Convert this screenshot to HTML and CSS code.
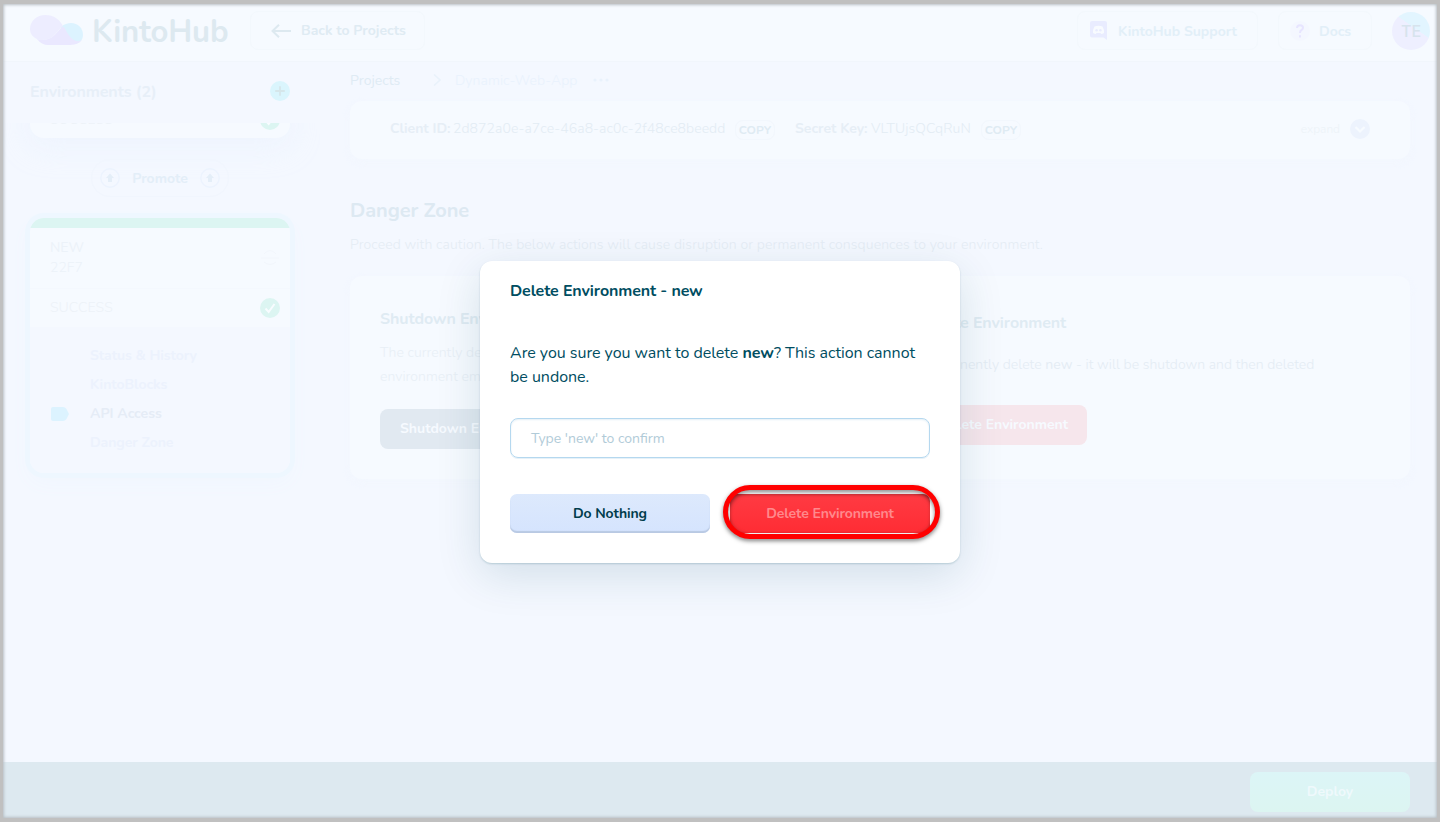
FILE: index.html
```html
<!DOCTYPE html>
<html lang="en">
<head>
<meta charset="utf-8">
<title>KintoHub</title>
<link rel="stylesheet" href="styles.css">
</head>
<body>
<div class="app">
  <header class="topbar">
    <svg class="cloud" width="54" height="31" viewBox="0 0 54 31">
      <path d="M31 12C34 9 38 8 41 8C48 8 53 13 53 20C53 26 48 29 43 29L32 24Z" fill="#dcf3ff"/>
      <path d="M7 24C20 27 25 20 30 14C34 9 35 14 38 19C42 25 47 28 52 25C49 29 44 30 38 30H18C14 30 10 28 7 24Z" fill="#eae8ff"/>
      <path d="M15.500 0C24 0 29 4 33 11C27 15 24 25 13 25C11 25 9 25 7 24C3 22 0 19 0 14C0 6 7 0 15.500 0Z" fill="#ededff"/>
    </svg>
    <span class="wordmark">KintoHub</span>
    <a class="pill back">
      <svg width="20" height="14" viewBox="0 0 20 14" fill="none" stroke="#dde9f0" stroke-width="2"><path d="M20 7H2M8 0.700L1.500 7L8 13.300"/></svg>
      <span>Back to Projects</span>
    </a>
    <span class="spacer"></span>
    <a class="pill support">
      <svg width="17" height="19" viewBox="0 0 17 19"><path d="M2 0H15Q17 0 17 2V19L13.500 16.500H2Q0 16.500 0 14.500V2Q0 0 2 0Z" fill="#e9ecff"/><path d="M4.500 5.500Q8.500 4 12.500 5.500Q14.500 9 14 12Q12.500 13 11.200 13L10.500 12H6.500L5.800 13Q4.500 13 3 12Q2.500 9 4.500 5.500Z" fill="#f8fbff"/><circle cx="6.600" cy="9.300" r="1.200" fill="#e9ecff"/><circle cx="10.400" cy="9.300" r="1.200" fill="#e9ecff"/></svg>
      <span>KintoHub Support</span>
    </a>
    <a class="pill docs">
      <span class="question"><svg width="8" height="14" viewBox="0 0 8 14" fill="none" stroke="#e7e5ff" stroke-width="2"><path d="M1 4Q1 1.200 4 1.200Q7 1.200 7 3.700Q7 5.200 5.500 6Q4 6.800 4 9"/><path d="M4 11.300V13.600"/></svg></span>
      <span>Docs</span>
    </a>
    <span class="avatar">TE</span>
  </header>

  <div class="columns">
    <aside class="sidebar">
      <div class="side-head">
        <h2>Environments (2)</h2>
        <svg width="20" height="20" viewBox="0 0 20 20"><circle cx="10" cy="10" r="10" fill="#daf5fd"/><path d="M10 5.200V14.800M5.200 10H14.800" stroke="#d5e6ea" stroke-width="1.800"/></svg>
      </div>
      <div class="env-list">
        <div class="env-card previous">
          <div class="status"><span>SUCCESS</span>
            <svg width="20" height="20" viewBox="0 0 20 20"><circle cx="10" cy="10" r="10" fill="#dcf5f2"/><path d="M5.500 10.500L8.700 14L14.500 6" fill="none" stroke="#f8fcff" stroke-width="2"/></svg>
          </div>
        </div>
        <div class="promote">
          <svg width="20" height="20" viewBox="0 0 20 20"><circle cx="10" cy="10" r="9.200" fill="none" stroke="#ecf3fe" stroke-width="1.400"/><path d="M10 5.500L14 10H12V14H8V10H6Z" fill="#e4eef8"/></svg>
          <span>Promote</span>
          <svg width="20" height="20" viewBox="0 0 20 20"><circle cx="10" cy="10" r="9.200" fill="none" stroke="#ecf3fe" stroke-width="1.400"/><path d="M10 5.500L14 10H12V14H8V10H6Z" fill="#e4eef8"/></svg>
        </div>
        <div class="env-card current">
          <div class="env-stripe"></div>
          <div class="env-name">
            <div><div class="name">NEW</div><div class="hash">22F7</div></div>
            <svg width="20" height="16" viewBox="0 0 20 16" fill="none" stroke="#f2f6fc" stroke-width="1"><path d="M4 4Q10-3 16 4M1 8H19M4 12Q10 17 16 12"/></svg>
          </div>
          <div class="status"><span>SUCCESS</span>
            <svg width="20" height="20" viewBox="0 0 20 20"><circle cx="10" cy="10" r="10" fill="#dcf5f2"/><path d="M5.500 10.500L8.700 14L14.500 6" fill="none" stroke="#f8fcff" stroke-width="2"/></svg>
          </div>
          <nav class="env-nav">
            <a>Status &amp; History</a>
            <a>KintoBlocks</a>
            <a class="active"><svg width="18" height="14" viewBox="0 0 18 14"><path d="M2 0H12Q14 0 15.500 2L18 7L15.500 12Q14 14 12 14H2Q0 14 0 12V2Q0 0 2 0Z" fill="#dcf3ff"/></svg>API Access</a>
            <a>Danger Zone</a>
          </nav>
        </div>
      </div>
    </aside>

    <main class="main">
      <div class="crumbs">
        <span class="root">Projects</span>
        <svg width="9" height="12" viewBox="0 0 9 12" fill="none" stroke="#e9f2fb" stroke-width="1.600"><path d="M1 .5L7 6L1 11.500"/></svg>
        <span class="leaf">Dynamic-Web-App</span>
        <svg width="16" height="4" viewBox="0 0 16 4" fill="#e9f2fc"><circle cx="2" cy="2" r="1.600"/><circle cx="8" cy="2" r="1.600"/><circle cx="14" cy="2" r="1.600"/></svg>
      </div>
      <section class="panel keys">
        <b class="client">Client ID:</b><span class="id">2d872a0e-a7ce-46a8-ac0c-2f48ce8beedd</span><span class="copy">COPY</span>
        <b class="secret">Secret Key:</b><span class="key">VLTUjsQCqRuN</span><span class="copy">COPY</span>
        <span class="spacer"></span>
        <span class="expand">expand</span>
        <svg width="20" height="20" viewBox="0 0 20 20"><circle cx="10" cy="10" r="10" fill="#edf3fd"/><path d="M5.500 8L10 12.500L14.500 8" fill="none" stroke="#f7fbff" stroke-width="2.200"/></svg>
      </section>
      <h1>Danger Zone</h1>
      <p class="intro">Proceed with caution. The below actions will cause disruption or permanent consquences to your environment.</p>
      <div class="cards">
        <section class="action shutdown">
          <h3>Shutdown Environment</h3>
          <p>The currently deployed<br>environment emptied</p>
          <button>Shutdown Environment</button>
        </section>
        <section class="action delete">
          <h3>Delete Environment</h3>
          <p>Permanently delete <b>new</b> - it will be shutdown and then deleted</p>
          <button>Delete Environment</button>
        </section>
      </div>
    </main>
  </div>

  <footer class="footer"><button>Deploy</button></footer>

  <div class="modal" role="dialog">
    <h2>Delete Environment - new</h2>
    <p>Are you sure you want to delete <b>new</b>? This action cannot be undone.</p>
    <div class="input">Type 'new' to confirm</div>
    <div class="buttons">
      <button class="cancel">Do Nothing</button>
      <button class="confirm">Delete Environment</button>
    </div>
    <div class="ring"></div>
  </div>
  <div class="frame"></div>
</div>
</body>
</html>
```
FILE: styles.css
```css
* { box-sizing: border-box; }
body { margin: 0; font-family: Nunito, Lato, "Open Sans", sans-serif; font-size: 14px; }
h1, h2, h3, p { margin: 0; }
button { border: 0; font: inherit; font-weight: 700; }
svg { display: block; flex: none; }
.app { position: relative; width: 1440px; height: 822px; overflow: hidden; background: #f4f8ff; display: flex; flex-direction: column; }
.spacer { flex: 1; }

.topbar { height: 62px; flex: none; display: flex; align-items: center; padding: 0 10px 0 30px; background: #f6faff; border-bottom: 1px solid #f1f6fc; }
.wordmark { width: 158px; margin-left: 8px; padding-top: 2px; color: #dde9f0; font-size: 31px; font-weight: 700; line-height: 40px; letter-spacing: -.15px; }
.pill { height: 39px; display: flex; align-items: center; border: 1px solid #f3f8fd; border-radius: 8px; color: #dfebf3; font-weight: 700; }
.back { width: 175px; padding-left: 20px; gap: 10px; }
.support { width: 181px; padding-left: 12px; gap: 11px; color: #e2eff8; }
.docs { width: 94px; margin-left: 20px; padding-left: 11px; gap: 9px; color: #e2eff8; }
.support span, .docs > span:last-child { padding-top: 1px; }
.question { width: 20px; height: 20px; border-radius: 50%; background: #f4f7ff; display: grid; place-items: center; }
.avatar { width: 38px; height: 38px; margin-left: 20px; border-radius: 50%; background: linear-gradient(35deg, #eeefff 58%, #e2f5ff 59%); color: #d7e3ed; font: 500 16px/38px Inter, sans-serif; text-align: center; }

.columns { flex: 1; display: flex; min-height: 0; }
.sidebar { width: 320px; flex: none; background: #f4f8ff; }
.side-head { height: 61px; padding: 0 30px; display: flex; align-items: center; justify-content: space-between; }
.side-head h2 { margin-top: -2px; color: #e7eff8; font-size: 16px; line-height: 24px; letter-spacing: -.05px; }
.side-head svg { margin-top: -3px; }
.env-list { height: 638px; padding: 0 30px; overflow: hidden; background: #f4f8ff; }
.env-card { width: 260px; background: #f6faff; }
.status { height: 38px; padding: 0 10px 0 20px; display: flex; align-items: center; justify-content: space-between; color: #edf2f8; font-weight: 300; letter-spacing: .1px; }
.status span { margin-top: -1px; }
.current .status svg { margin-top: -1px; }
.previous { height: 37px; margin-top: -22px; border-radius: 0 0 14px 14px; box-shadow: 0 8px 30px rgba(225, 238, 252, .35); }
.promote { width: 138px; height: 38px; margin: 21px auto 0; border: 1px solid #f1f6fe; border-radius: 19px; padding: 0 8px; display: flex; align-items: center; justify-content: space-between; color: #e3eef8; font-weight: 700; }
.current { height: 255px; margin-top: 21px; overflow: hidden; border-radius: 14px; box-shadow: 0 0 0 5px #eef7ff, 0 8px 20px #f0f6fe; }
.env-stripe { height: 10px; background: #dcf5f2; }
.env-name { height: 61px; padding: 10px 10px 0 20px; display: flex; justify-content: space-between; border-bottom: 1px solid #f4f8fe; line-height: 20px; color: #ecf2f9; }
.env-name .hash { font-weight: 300; }
.env-name svg { margin-top: 12px; }
.env-nav { height: 147px; padding: 14px 0 0 60px; background: #f4f8ff; color: #ecf2fd; font-weight: 700; line-height: 29px; letter-spacing: -.05px; }
.env-nav a { display: flex; align-items: center; }
.env-nav .active { margin-left: -39px; gap: 21px; color: #e5ecf6; letter-spacing: 0; }

.main { flex: 1; padding: 6px 30px 0; }
.crumbs { height: 24px; display: flex; align-items: center; }
.crumbs .root { width: 83px; color: #dfebf4; }
.crumbs .leaf { width: 138px; margin-left: 13px; color: #e9f2fd; font-weight: 300; letter-spacing: .1px; }
.panel { background: #f6faff; border-radius: 12px; box-shadow: 0 3px 8px rgba(241, 247, 254, .6); }
.keys { height: 58px; margin-top: 9px; padding: 0 40px 2px; display: flex; align-items: center; color: #e6eef6; white-space: nowrap; }
.keys > * { flex-shrink: 0; }
.keys .client { width: 63px; margin-top: -1px; }
.keys .id { width: 282px; margin-top: -1px; font-weight: 300; color: #e3ecf4; letter-spacing: .08px; }
.copy { width: 40px; height: 20px; margin-top: 1px; border: 1px solid #f2f7fd; border-radius: 8px; color: #dfebf3; font-size: 12px; font-weight: 700; line-height: 18px; text-align: center; }
.keys .secret { width: 76px; margin: -1px 0 0 20px; }
.keys .key { width: 110px; margin-top: -1px; font-weight: 300; color: #e3ecf4; letter-spacing: .12px; }
.keys .expand { color: #edf3f8; font-size: 12px; font-weight: 300; margin-right: 10px; }
h1 { margin-top: 37px; color: #dde9f2; font-size: 20px; line-height: 30px; letter-spacing: -.08px; }
.intro { margin-top: 9px; line-height: 20px; color: #e4ecf4; white-space: nowrap; font-weight: 300; letter-spacing: .12px; }
.cards { display: grid; grid-template-columns: 1fr 1fr; margin-top: 21px; background: #f6faff; border-radius: 12px; box-shadow: 0 3px 8px rgba(241, 247, 254, .6); }
.action { height: 203px; padding: 31px 30px 30px; }
.action h3 { color: #dfebf3; font-size: 16px; line-height: 24px; letter-spacing: -.1px; }
.action p { margin-top: 10px; line-height: 24px; color: #e8eff6; white-space: nowrap; font-weight: 300; letter-spacing: .05px; }
.action button { height: 40px; margin-top: 20px; padding: 0 20px 1px; border-radius: 8px; color: #f6faff; }
.shutdown button { background: #e1e9f1; }
.delete { padding-top: 35px; padding-left: 40px; }
.delete p { margin-top: 18px; color: #e4ecf4; }
.delete button { width: 167px; margin-top: 28px; background: #f6e6ec; padding: 0 0 1px; }

.footer { height: 60px; flex: none; padding: 10px 30px; background: #dde9f0; text-align: right; }
.footer button { width: 160px; height: 40px; padding-bottom: 3px; border-radius: 8px; background: linear-gradient(#dcf5f7, #dcf5f1); color: #eff9fc; text-align: center; }

.modal { position: absolute; left: 480px; top: 261px; width: 480px; height: 302px; padding: 18px 30px 30px; background: #fff; border-radius: 12px; color: #004d61; box-shadow: 0 1px 2px rgba(0, 77, 97, .2), 0 12px 45px rgba(0, 70, 95, .14); font-size: 16px; }
.modal h2 { font-size: 16px; line-height: 24px; letter-spacing: -.1px; }
.modal p { margin-top: 38px; line-height: 24px; letter-spacing: -.03px; }
.input { height: 40px; margin-top: 29px; padding-left: 20px; border: 1px solid #b5d8ef; border-radius: 8px; box-shadow: inset 0 1px 2px #e4eff6, 0 1px 0 #e6f1f8; color: #b1cbd8; font-size: 14px; line-height: 39px; }
.buttons { display: flex; gap: 20px; margin-top: 36px; }
.buttons button { width: 200px; height: 39px; border-radius: 7px; font-size: 14px; letter-spacing: -.1px; }
.cancel { background: linear-gradient(#dde9fc, #d5e4fe); color: #003c4b; box-shadow: inset 0 -2px 1px #b9c9e3; }
.confirm { background: linear-gradient(#ff3b43, #ff2c34); color: #ff898d; box-shadow: inset 0 1px 3px rgba(120, 40, 40, .4); }
.ring { position: absolute; left: 242.500px; top: 224px; width: 217.500px; height: 53.500px; border: 5px solid #f00; border-radius: 27px; filter: drop-shadow(0 2px 2px rgba(0, 0, 0, .5)); }
.frame { position: absolute; inset: 0; pointer-events: none; border: solid #c0c0c0; border-width: 4px 3px 4px 3px; box-shadow: inset 0 0 3px 1px #b8bfc4; }
```
